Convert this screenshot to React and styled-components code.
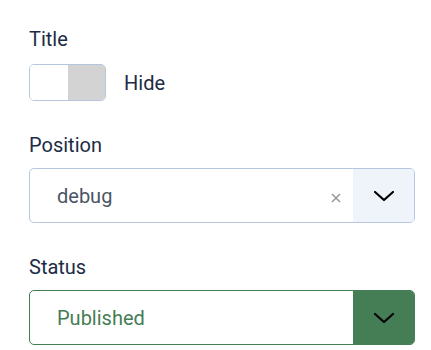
import React from 'react';
import styled, { createGlobalStyle } from 'styled-components';

const GlobalStyle = createGlobalStyle`
    body {
        margin : 0;
        background : #ffffff;
        font-family : Roboto, "Liberation Sans", sans-serif;
    }
`

function Chevron() {
    return (
        <svg width="22" height="12" viewBox="0 0 22 12" fill="none">
            <polyline points="2,2 11,10 20,2" stroke="#000" strokeWidth="2.2" strokeLinecap="round" strokeLinejoin="round" />
        </svg>
    );
}

function Clear() {
    return (
        <svg width="10" height="10" viewBox="0 0 10 10">
            <path d="M1 1L9 9M9 1L1 9" stroke="#9a9a9a" strokeWidth="1.6" />
        </svg>
    );
}

function App() {
    return (
        <StForm>
            <GlobalStyle />
            <StGroup>
                <StLabel>Title</StLabel>
                <StToggleRow>
                    <StToggle>
                        <StHalf />
                        <StHalf off />
                    </StToggle>
                    <StToggleText>Hide</StToggleText>
                </StToggleRow>
            </StGroup>

            <StGroup>
                <StLabel>Position</StLabel>
                <StSelect>
                    <StValue>debug</StValue>
                    <StClear><Clear /></StClear>
                    <StButton><Chevron /></StButton>
                </StSelect>
            </StGroup>

            <StGroup>
                <StLabel>Status</StLabel>
                <StSelect success>
                    <StValue success>Published</StValue>
                    <StButton success><Chevron /></StButton>
                </StSelect>
            </StGroup>
        </StForm>
    );
}

export default App;

const StForm = styled.div`
    display : flex;
    flex-direction : column;
    gap : 29px;
    padding : 24px 16px 0 29px;
`
const StGroup = styled.div`
    display : flex;
    flex-direction : column;
`
const StLabel = styled.label`
    font-size : 20px;
    line-height : 30px;
    color : #1c2c45;
    margin-bottom : 8px;
`
const StToggleRow = styled.div`
    display : flex;
    align-items : center;
    gap : 18px;
    margin-top : 2px;
`
const StToggle = styled.div`
    display : flex;
    width : 77px;
    height : 37px;
    box-sizing : border-box;
    border : 1px solid #b6c6de;
    border-radius : 5px;
    overflow : hidden;
`
const StHalf = styled.span`
    flex : 1;
    background : ${props => props.off ? '#d3d3d3' : '#ffffff'};
`
const StToggleText = styled.span`
    font-size : 20px;
    color : #1c2c45;
`
const StSelect = styled.div`
    display : flex;
    align-items : stretch;
    height : 55px;
    box-sizing : border-box;
    border : 1px solid ${props => props.success ? '#457d54' : '#b6c6de'};
    border-radius : 5px;
    overflow : hidden;
`
const StValue = styled.span`
    flex : 1;
    display : flex;
    align-items : center;
    padding-left : 27px;
    font-size : 20px;
    color : ${props => props.success ? '#457d54' : '#4a5563'};
`
const StClear = styled.span`
    display : flex;
    align-items : center;
    padding : 4px 12px 0 0;
`
const StButton = styled.span`
    display : flex;
    align-items : center;
    justify-content : center;
    width : 61px;
    background : ${props => props.success ? '#457d54' : '#eff4fb'};
`
